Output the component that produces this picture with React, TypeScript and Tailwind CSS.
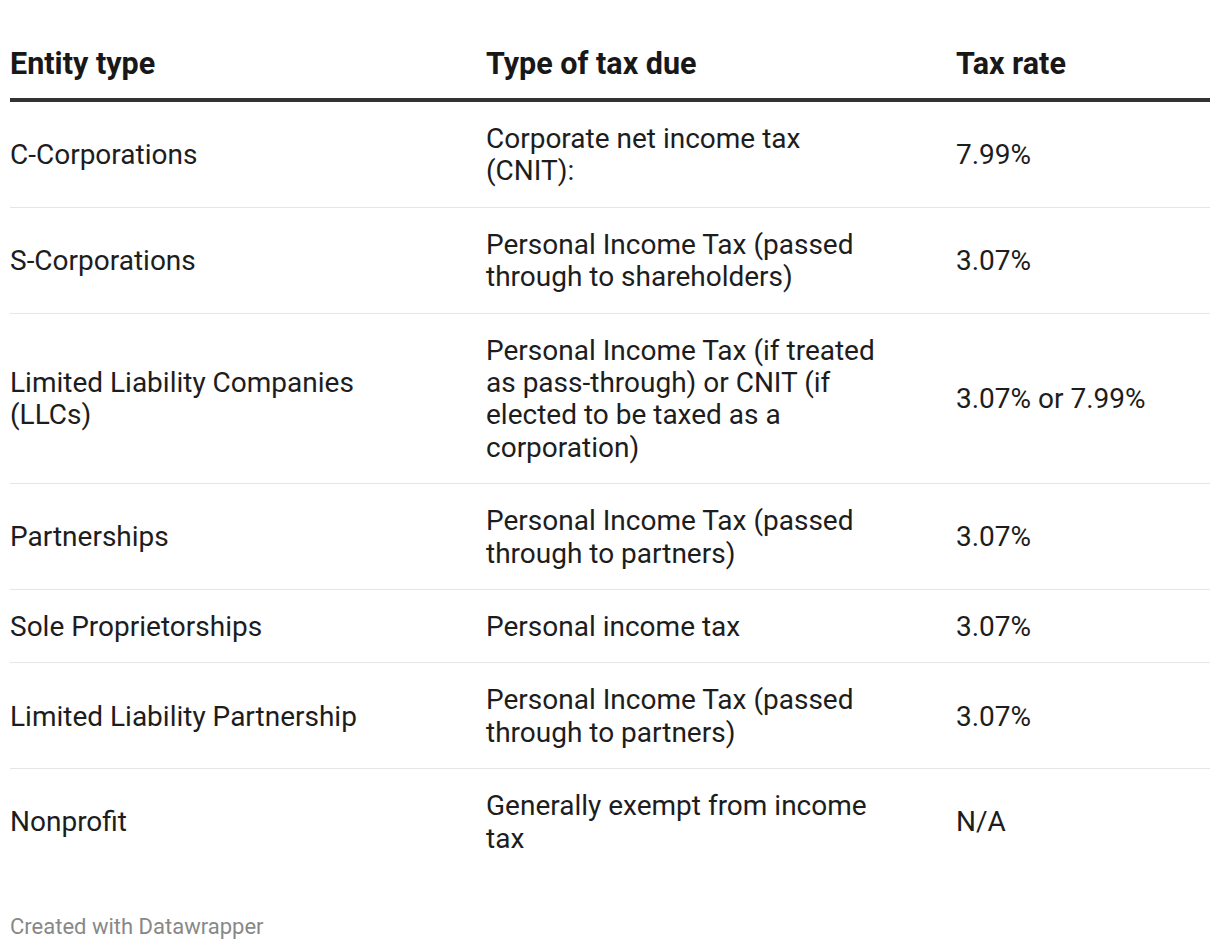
import React from "react";

const rows: [string, string, string][] = [
  ["C-Corporations", "Corporate net income tax (CNIT):", "7.99%"],
  ["S-Corporations", "Personal Income Tax (passed through to shareholders)", "3.07%"],
  [
    "Limited Liability Companies (LLCs)",
    "Personal Income Tax (if treated as pass-through) or CNIT (if elected to be taxed as a corporation)",
    "3.07% or 7.99%",
  ],
  ["Partnerships", "Personal Income Tax (passed through to partners)", "3.07%"],
  ["Sole Proprietorships", "Personal income tax", "3.07%"],
  ["Limited Liability Partnership", "Personal Income Tax (passed through to partners)", "3.07%"],
  ["Nonprofit", "Generally exempt from income tax", "N/A"],
];

export default function App() {
  return (
    <div className="w-[1220px] h-[950px] bg-white px-[10px] pt-[48px] font-['Roboto',sans-serif]">
      <div className="grid grid-cols-[476px_470px_254px] border-b-4 border-[#333333] pb-[18px]">
        <div className="text-[30.5px] leading-[32px] font-bold text-[#181818]">Entity type</div>
        <div className="text-[30.5px] leading-[32px] font-bold text-[#181818]">Type of tax due</div>
        <div className="text-[30.5px] leading-[32px] font-bold text-[#181818]">Tax rate</div>
      </div>
      {rows.map((r, i) => (
        <div
          key={i}
          className={`grid grid-cols-[476px_470px_254px] items-center pt-[21px] pb-[19px] text-[28px] leading-[32.4px] text-[#1d1d1d] ${
            i < rows.length - 1 ? "border-b border-[#e6e6e6]" : ""
          }`}
        >
          <div className="max-w-[400px]">{r[0]}</div>
          <div className="max-w-[396px]">{r[1]}</div>
          <div>{r[2]}</div>
        </div>
      ))}
      <div className="mt-[41px] text-[22px] leading-[24px] text-[#888888]">Created with Datawrapper</div>
    </div>
  );
}
